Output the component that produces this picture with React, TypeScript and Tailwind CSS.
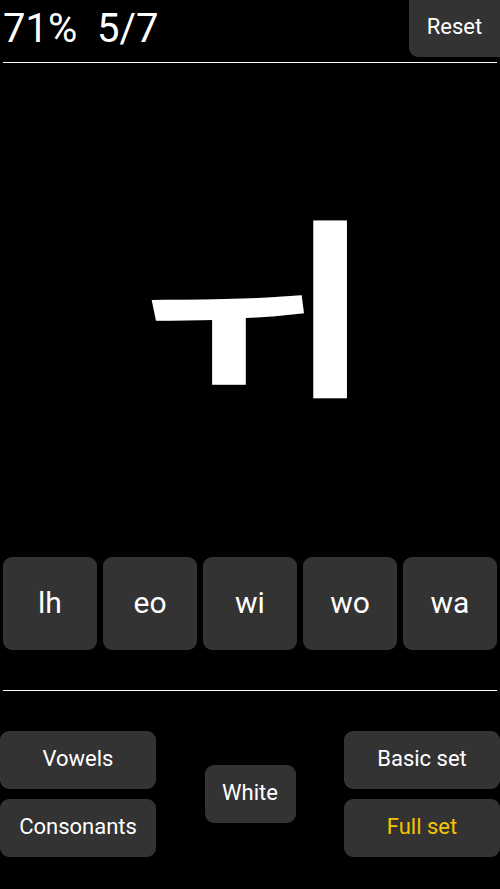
import React from "react";

const font = { fontFamily: "Roboto, 'Noto Sans', sans-serif" };

const answers = ["lh", "eo", "wi", "wo", "wa"];

function Btn({
  label,
  className,
}: {
  label: string;
  className: string;
}) {
  return (
    <button
      className={
        "flex items-center justify-center rounded-[9px] bg-[#333333] text-[22px] " +
        className
      }
    >
      {label}
    </button>
  );
}

export default function App() {
  return (
    <div
      className="flex h-[889px] w-[500px] flex-col overflow-hidden bg-black text-white"
      style={font}
    >
      {/* score + reset */}
      <div className="flex h-[57px] items-start justify-between">
        <div className="whitespace-pre pl-[3px] pt-[5px] text-[40px] leading-[48px]">
          71%  5/7
        </div>
        <Btn label="Reset" className="h-[57px] w-[91px] rounded-t-none rounded-br-none pb-[4px]" />
      </div>
      <div className="mx-[3px] mt-[5px] h-px bg-white" />

      {/* current letter */}
      <div className="flex flex-1 items-center justify-center">
        <span
          className="mb-[26px] scale-x-[1.1] scale-y-[0.84] text-[230px] font-bold leading-none"
          style={{ fontFamily: "'Noto Sans CJK KR', sans-serif" }}
        >
          ㅟ
        </span>
      </div>

      {/* answer choices */}
      <div className="flex gap-[6px] px-[3px]">
        {answers.map((a) => (
          <Btn key={a} label={a} className="h-[93px] flex-1 pb-[2px] text-[30px]" />
        ))}
      </div>
      <div className="mx-[3px] mt-[40px] h-px bg-white" />

      {/* options */}
      <div className="mt-[40px] flex h-[126px] items-center justify-between">
        <div className="flex w-[156px] flex-col gap-[10px]">
          <Btn label="Vowels" className="h-[58px] pb-[4px]" />
          <Btn label="Consonants" className="h-[58px] pb-[4px]" />
        </div>
        <Btn label="White" className="h-[58px] w-[91px] pb-[4px]" />
        <div className="flex w-[156px] flex-col gap-[10px]">
          <Btn label="Basic set" className="h-[58px] pb-[4px]" />
          <Btn label="Full set" className="h-[58px] pb-[4px] text-[#f5c400]" />
        </div>
      </div>
      <div className="h-[32px]" />
    </div>
  );
}
